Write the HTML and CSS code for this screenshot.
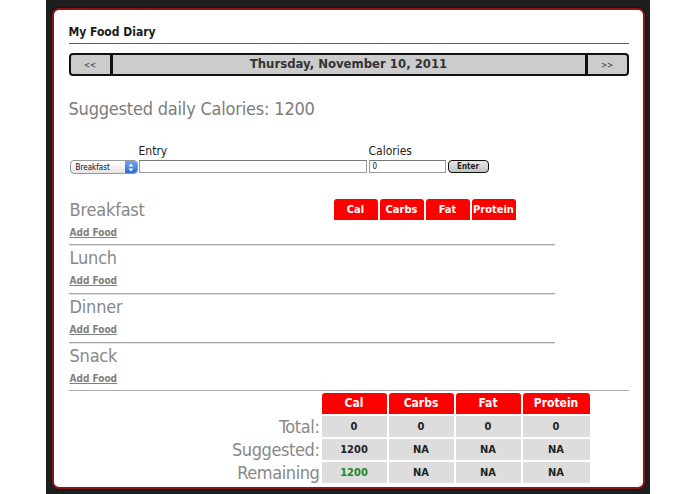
FILE: index.html
```html
<!DOCTYPE html>
<html>
<head>
<meta charset="utf-8">
<title>My Food Diary</title>
<link rel="stylesheet" href="styles.css">
</head>
<body>
<div class="stage">
  <div class="panel">
    <h1 class="title">My Food Diary</h1>
    <div class="datenav">
      <div class="navbtn prev">&lt;&lt;</div>
      <div class="date">Thursday, November 10, 2011</div>
      <div class="navbtn next">&gt;&gt;</div>
    </div>
    <div class="suggested">Suggested daily Calories: 1200</div>
    <div class="entryform">
      <span></span>
      <span class="flabel">Entry</span>
      <span class="flabel">Calories</span>
      <span></span>
      <div class="select"><span class="selval">Breakfast</span><span class="selarrow"><svg width="6" height="9" viewBox="0 0 6 9"><path d="M3 0.5 L5.5 3.5 H0.5 Z M3 8.5 L5.5 5.5 H0.5 Z" fill="#fff"/></svg></span></div>
      <div class="textbox"></div>
      <div class="textbox cal">0</div>
      <div class="enter">Enter</div>
    </div>
    <div class="meals">
      <div class="meal">
        <div class="mealrow">
          <div class="mealname first">Breakfast</div>
          <div class="heads">
            <div class="head">Cal</div>
            <div class="head">Carbs</div>
            <div class="head">Fat</div>
            <div class="head">Protein</div>
          </div>
        </div>
        <a class="addfood" href="#">Add Food</a>
      </div>
      <div class="meal">
        <div class="mealname">Lunch</div>
        <a class="addfood" href="#">Add Food</a>
      </div>
      <div class="meal">
        <div class="mealname">Dinner</div>
        <a class="addfood" href="#">Add Food</a>
      </div>
      <div class="meal">
        <div class="mealname">Snack</div>
        <a class="addfood" href="#">Add Food</a>
      </div>
    </div>
    <div class="totals">
      <div></div>
      <div class="th">Cal</div>
      <div class="th">Carbs</div>
      <div class="th">Fat</div>
      <div class="th">Protein</div>

      <div class="rl">Total:</div>
      <div class="td">0</div>
      <div class="td">0</div>
      <div class="td">0</div>
      <div class="td">0</div>

      <div class="rl">Suggested:</div>
      <div class="td">1200</div>
      <div class="td">NA</div>
      <div class="td">NA</div>
      <div class="td">NA</div>

      <div class="rl">Remaining</div>
      <div class="td green">1200</div>
      <div class="td">NA</div>
      <div class="td">NA</div>
      <div class="td">NA</div>
    </div>
  </div>
</div>
</body>
</html>
```
FILE: styles.css
```css
html, body {
  margin: 0;
  padding: 0;
  background: #ffffff;
}
body {
  font-family: "DejaVu Sans Condensed", "Liberation Sans", sans-serif;
}
.stage {
  width: 604px;
  height: 494px;
  margin: 0 auto;
  background: #1e1e1e;
  padding: 8px 0 0 6px;
  box-sizing: border-box;
}
.panel {
  width: 593px;
  height: 481px;
  box-sizing: border-box;
  background: #fff;
  border: 2px solid #8a1616;
  border-radius: 7px;
  box-shadow: 0 0 2px #000;
  padding: 15px 14px 0 15px;
  overflow: hidden;
}
.title {
  margin: 0;
  font-size: 12px;
  line-height: 15px;
  font-weight: bold;
  color: #1a1a1a;
  padding-bottom: 3px;
  border-bottom: 1px solid #a04a40;
}
.datenav {
  margin-top: 9px;
  height: 23px;
  box-sizing: border-box;
  border: 2px solid #111;
  border-radius: 4px;
  background: #cccccc;
  display: flex;
  align-items: stretch;
}
.navbtn {
  width: 42px;
  font-size: 8px;
  color: #333;
  display: flex;
  align-items: center;
  justify-content: center;
  padding-top: 2px;
  box-sizing: border-box;
}
.prev { border-right: 3px solid #111; }
.next { border-left: 3px solid #111; }
.date {
  flex: 1;
  text-align: center;
  font-size: 13px;
  font-weight: bold;
  color: #333;
  line-height: 17px;
}
.suggested {
  margin-top: 22px;
  font-size: 18px;
  line-height: 22px;
  color: #7c7c7c;
  letter-spacing: -0.2px;
}
.entryform {
  margin-top: 24px;
  display: grid;
  grid-template-columns: 68px 227px 77px 41px;
  column-gap: 2px;
  row-gap: 2px;
  padding-left: 1px;
}
.entryform > :nth-child(2) { margin-left: -1px; }
.flabel {
  font-size: 12px;
  line-height: 14px;
  color: #222;
}
.select {
  height: 14px;
  box-sizing: border-box;
  border: 1px solid #999;
  border-radius: 4px;
  background: linear-gradient(#ffffff, #e4e4e4);
  display: flex;
  align-items: center;
  overflow: hidden;
  font-size: 8px;
  color: #111;
}
.selval {
  flex: 1;
  padding-left: 5px;
}
.selarrow {
  width: 12px;
  height: 100%;
  background: linear-gradient(#6fa3ef, #2f6bd6);
  display: flex;
  align-items: center;
  justify-content: center;
}
.textbox {
  height: 13px;
  box-sizing: border-box;
  border: 1px solid #9a9a9a;
  border-top-color: #777;
  background: #fff;
  font-size: 8px;
  line-height: 11px;
  padding-left: 3px;
  color: #111;
}
.textbox:nth-child(6) { margin-left: -1px; }
.enter {
  height: 13px;
  box-sizing: border-box;
  border: 1px solid #111;
  border-radius: 4px;
  background: linear-gradient(#e6e6e6, #c4c4c4);
  font-size: 8px;
  font-weight: bold;
  line-height: 11px;
  text-align: center;
  color: #222;
}
.meals {
  margin-top: 25px;
  width: 486px;
}
.meal {
  height: 49px;
  box-sizing: border-box;
  border-bottom: 1px solid #a8a8a8;
  box-shadow: 0 1px 0 #e2e2e2;
  padding-top: 2px;
  padding-left: 1px;
}
.meal:first-child {
  padding-top: 0;
  height: 46px;
}
.meal:last-child {
  height: 47px;
  border-bottom: none;
  box-shadow: none;
}
.mealrow {
  display: flex;
  align-items: flex-start;
}
.mealname {
  font-size: 18px;
  line-height: 22px;
  color: #888888;
  height: 22px;
  letter-spacing: -0.2px;
}
.mealname.first {
  width: 264px;
}
.heads {
  display: flex;
  gap: 2px;
}
.head {
  width: 44px;
  height: 21px;
  background: #ff0000;
  border-radius: 3px 3px 0 0;
  color: #fff;
  font-size: 11px;
  font-weight: bold;
  line-height: 21px;
  text-align: center;
  white-space: nowrap;
  overflow: hidden;
}
.addfood {
  display: inline-block;
  margin-top: 2px;
  font-size: 10px;
  line-height: 12px;
  font-weight: bold;
  color: #808080;
  text-decoration: underline;
}
.totals {
  border-top: 1px solid #a8a8a8;
  padding-top: 2px;
  display: grid;
  grid-template-columns: 251px 65px 65px 65px 67px;
  gap: 2px;
  grid-auto-rows: 21px;
}
.th {
  background: #ff0000;
  border-radius: 3px 3px 0 0;
  color: #fff;
  font-size: 12px;
  font-weight: bold;
  line-height: 21px;
  text-align: center;
}
.rl {
  text-align: right;
  font-size: 18px;
  line-height: 21px;
  color: #888888;
  white-space: nowrap;
  letter-spacing: -0.4px;
}
.td {
  background: #dddddd;
  font-size: 11px;
  font-weight: bold;
  line-height: 21px;
  text-align: center;
  color: #222;
}
.td.green { color: #228822; }
```
